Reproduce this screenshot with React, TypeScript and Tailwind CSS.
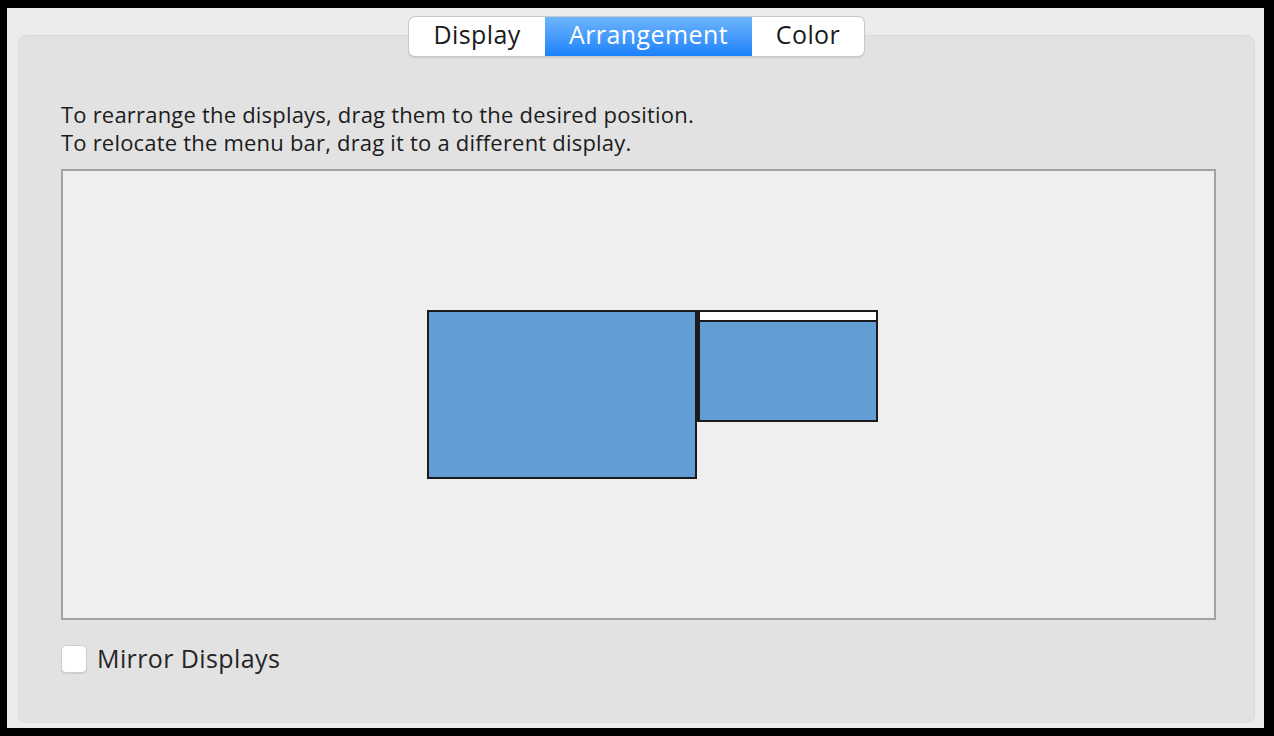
import React from 'react';

const font = { fontFamily: '"Open Sans", "Inter", "Liberation Sans", sans-serif' };

const tabs = [
  { label: 'Display', w: 'w-[136px]', active: false },
  { label: 'Arrangement', w: 'w-[207px]', active: true },
  { label: 'Color', w: 'w-[112px]', active: false },
];

const Tabs: React.FC = () => (
  <div className="relative z-10 flex justify-center">
    <div className="flex h-[39px] overflow-hidden rounded-[6px] bg-white shadow-[0_0_0_1px_#c9c9c9,0_1px_2px_rgba(0,0,0,0.25)]">
      {tabs.map((t) => (
        <div
          key={t.label}
          className={`${t.w} flex items-center justify-center pb-[3px] text-[25px] tracking-[0.4px] ${
            t.active
              ? 'bg-gradient-to-b from-[#6db4fb] to-[#1681fb] text-white'
              : 'text-[#1a1a1a]'
          }`}
        >
          {t.label}
        </div>
      ))}
    </div>
  </div>
);

// the two monitors inside the arrangement box
const Displays: React.FC = () => (
  <div className="relative h-full w-full">
    <div className="absolute left-[364px] top-[139px] h-[169px] w-[270px] border-2 border-[#1b1b1b] bg-[#629dd5]" />
    <div className="absolute left-[633px] top-[139px] h-[112px] w-[182px] border-2 border-l-4 border-[#1b1b1b] bg-[#629dd5]">
      <div className="h-[10px] border-b-2 border-[#1b1b1b] bg-white" />
    </div>
  </div>
);

export default function App() {
  return (
    <div className="h-[736px] w-[1274px] bg-black pb-[8px] pl-[7px] pr-[10px] pt-[8px]" style={font}>
      <div className="flex h-full w-full flex-col bg-[#ececec] pb-[5px] pl-[11px] pr-[9px] pt-[9px]">
        <Tabs />
        <div className="-mt-[21px] flex flex-1 flex-col rounded-[8px] border border-[#dadada] bg-[#e2e2e2] pl-[42px] pr-[38px] pt-[64px]">
          <div className="text-[22px] leading-[28px] tracking-[0.2px] text-[#1c1c1c]">
            <p>To rearrange the displays, drag them to the desired position.</p>
            <p>To relocate the menu bar, drag it to a different display.</p>
          </div>
          <div className="mt-[13px] h-[451px] border-2 border-[#a3a3a3] bg-[#efefef]">
            <Displays />
          </div>
          <div className="mt-[20px] flex items-center gap-[10px]">
            <div className="h-[28px] w-[26px] rounded-[5px] border border-[#cfcfcf] bg-white shadow-[0_1px_1px_rgba(0,0,0,0.1)]" />
            <span className="text-[25px] tracking-[0.4px] text-[#252525]">Mirror Displays</span>
          </div>
        </div>
      </div>
    </div>
  );
}
